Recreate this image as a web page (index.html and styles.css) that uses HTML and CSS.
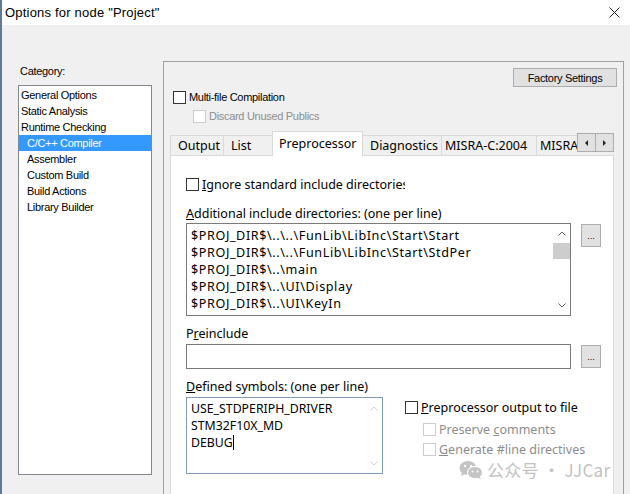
FILE: index.html
```html
<!DOCTYPE html>
<html lang="en">
<head>
  <meta charset="UTF-8">
  <title>Options for node "Project"</title>
  <link rel="stylesheet" href="styles.css">
</head>
<body>
  <div class="window">
    <!-- Title bar -->
    <div class="titlebar">
      <span class="title">Options for node "Project"</span>
      <svg class="close" width="11" height="11" viewBox="0 0 11 11">
        <path d="M0.5 0.5 L10.5 10.5 M10.5 0.5 L0.5 10.5" stroke="#222" stroke-width="1" fill="none"/>
      </svg>
    </div>

    <div class="main">
      <!-- Category list -->
      <div class="sidebar">
        <div class="cat-label">Category:</div>
        <ul class="cat-list">
          <li>General Options</li>
          <li>Static Analysis</li>
          <li>Runtime Checking</li>
          <li class="sub selected">C/C++ Compiler</li>
          <li class="sub">Assembler</li>
          <li class="sub">Custom Build</li>
          <li class="sub">Build Actions</li>
          <li class="sub">Library Builder</li>
        </ul>
      </div>

      <!-- Options panel -->
      <div class="panel">
        <div class="panel-top">
          <button class="btn factory">Factory Settings</button>
        </div>
        <label class="check multi"><span class="box"></span><span>Multi-file Compilation</span></label>
        <label class="check disabled discard"><span class="box"></span><span>Discard Unused Publics</span></label>

        <div class="tabs">
          <div class="tab-list">
            <div class="tab tab-output">Output</div>
            <div class="tab tab-list-item">List</div>
            <div class="tab active tab-pre">Preprocessor</div>
            <div class="tab tab-diag">Diagnostics</div>
            <div class="tab tab-misra">MISRA-C:2004</div>
            <div class="tab tab-misra">MISRA-C:1998</div>
          </div>
          <div class="tab-arrows">
            <button class="arrow"><span class="tri left"></span></button>
            <button class="arrow"><span class="tri right"></span></button>
          </div>
        </div>

        <div class="page">
          <label class="check ignore"><span class="box"></span><span class="ignore-text"><u>I</u>gnore standard include directories</span></label>

          <div class="field-label"><u>A</u>dditional include directories: (one per line)</div>
          <div class="field-row">
            <div class="textbox includes">
              <div class="lines">
                <div>$PROJ_DIR$\..\..\FunLib\LibInc\Start\Start</div>
                <div>$PROJ_DIR$\..\..\FunLib\LibInc\Start\StdPer</div>
                <div>$PROJ_DIR$\..\main</div>
                <div>$PROJ_DIR$\..\UI\Display</div>
                <div>$PROJ_DIR$\..\UI\KeyIn</div>
              </div>
              <div class="vscroll">
                <div class="sb-btn up"><svg width="8" height="5" viewBox="0 0 8 5"><path d="M0.5 4.5 L4 1 L7.5 4.5" stroke="#606060" fill="none"/></svg></div>
                <div class="sb-thumb"></div>
                <div class="sb-track"></div>
                <div class="sb-btn down"><svg width="8" height="5" viewBox="0 0 8 5"><path d="M0.5 0.5 L4 4 L7.5 0.5" stroke="#606060" fill="none"/></svg></div>
              </div>
            </div>
            <button class="btn dots">...</button>
          </div>

          <div class="field-label">P<u>r</u>einclude</div>
          <div class="field-row">
            <div class="textbox single"></div>
            <button class="btn dots">...</button>
          </div>

          <div class="field-label defined-label"><u>D</u>efined symbols: (one per line)</div>
          <div class="defined-row">
            <div class="textbox defines">
              <div class="lines">
                <div>USE_STDPERIPH_DRIVER</div>
                <div>STM32F10X_MD</div>
                <div>DEBUG<span class="caret"></span></div>
              </div>
              <div class="vscroll disabled">
                <div class="sb-btn up"><svg width="8" height="5" viewBox="0 0 8 5"><path d="M0.5 4.5 L4 1 L7.5 4.5" stroke="#cfcfcf" fill="none"/></svg></div>
                <div class="sb-track"></div>
                <div class="sb-btn down"><svg width="8" height="5" viewBox="0 0 8 5"><path d="M0.5 0.5 L4 4 L7.5 0.5" stroke="#cfcfcf" fill="none"/></svg></div>
              </div>
            </div>
            <div class="pp-options">
              <label class="check pp-main"><span class="box"></span><span><u>P</u>reprocessor output to file</span></label>
              <label class="check disabled pp-sub"><span class="box"></span><span>Preserve <u>c</u>omments</span></label>
              <label class="check disabled pp-sub"><span class="box"></span><span><u>G</u>enerate #line directives</span></label>
            </div>
          </div>

          <!-- watermark overlay -->
          <div class="watermark">
            <svg class="wechat" width="24" height="20" viewBox="0 0 24 20">
              <ellipse cx="9" cy="8" rx="8.5" ry="7" fill="#c4c4c4"/>
              <path d="M3 12 L2 16 L7 13.5 Z" fill="#c4c4c4"/>
              <ellipse cx="16" cy="12.5" rx="7.5" ry="6.2" fill="#c4c4c4" stroke="#fff" stroke-width="1.2"/>
              <path d="M20 16 L22 19 L17.5 17.5 Z" fill="#c4c4c4"/>
              <circle cx="6" cy="6" r="1.2" fill="#fff"/>
              <circle cx="12" cy="6" r="1.2" fill="#fff"/>
              <circle cx="13.5" cy="11.5" r="1" fill="#fff"/>
              <circle cx="18.5" cy="11.5" r="1" fill="#fff"/>
            </svg>
            <span class="wm-text">公众号 · JJCar</span>
          </div>
        </div>
      </div>
    </div>
  </div>
</body>
</html>
```

FILE: styles.css
```css
/* Base */
body {
  margin: 0;
  width: 630px;
  height: 494px;
  overflow: hidden;
  background-color: #f0f0f0;
  font-family: "Liberation Sans", Arial, sans-serif;
  color: #000;
}

.window {
  height: 494px;
  border-left: 2px solid #5d7a99;
  display: flex;
  flex-direction: column;
}

/* Small dialog font used by the outer controls */
.cat-label,
.cat-list li,
.factory,
.multi,
.discard {
  font-family: "Liberation Sans", Arial, sans-serif;
  font-size: 11px;
  letter-spacing: -0.3px;
}

/* Title bar */
.titlebar {
  height: 25px;
  flex: none;
  background-color: #fff;
  display: flex;
  align-items: center;
  justify-content: space-between;
  padding: 0 10px 0 3px;
  font-size: 13px;
  letter-spacing: 0.2px;
}

.main {
  display: flex;
  flex: 1;
  min-height: 0;
}

/* Category sidebar */
.sidebar {
  width: 134px;
  flex: none;
  margin-left: 16px;
  padding-top: 39px;
}

.cat-label {
  height: 14px;
  line-height: 14px;
  padding-left: 2px;
  margin-bottom: 7px;
}

.cat-list {
  list-style: none;
  margin: 0;
  padding: 1px 0 0;
  height: 390px;
  box-sizing: border-box;
  border: 1px solid #828790;
  background-color: #fff;
}

.cat-list li {
  height: 16px;
  line-height: 16px;
  padding-left: 2px;
  white-space: nowrap;
}

.cat-list li.sub {
  padding-left: 8px;
}

.cat-list li.selected {
  background-color: #3399ff;
  color: #fff;
}

/* Right panel */
.panel {
  width: 461px;
  flex: none;
  margin: 36px 0 0 11px;
  box-sizing: border-box;
  border: 1px solid #a0a0a0;
  border-bottom: none;
  display: flex;
  flex-direction: column;
}

.panel-top {
  display: flex;
  justify-content: flex-end;
  padding: 6px 6px 0 0;
}

.btn {
  background-color: #e1e1e1;
  border: 1px solid #adadad;
  box-sizing: border-box;
  padding: 0;
  color: #000;
}

.factory {
  width: 104px;
  height: 19px;
}

/* Checkboxes */
.check {
  display: flex;
  align-items: center;
  white-space: nowrap;
}

.box {
  width: 13px;
  height: 13px;
  flex: none;
  box-sizing: border-box;
  border: 1px solid #333;
  background-color: #fff;
  margin-right: 3px;
}

.check.disabled {
  color: #8d8d8d;
}

.check.disabled .box {
  border-color: #cccccc;
}

.multi,
.discard {
  height: 16px;
}

.multi {
  margin: 2px 0 0 9px;
}

.discard {
  margin: 3px 0 0 29px;
}

/* Tabs */
.tabs {
  display: flex;
  height: 24px;
  width: 444px;
  margin: 7px 0 0 6px;
  position: relative;
  z-index: 1;
}

.tab-list {
  display: flex;
  align-items: flex-start;
  flex: 1;
  height: 25px;
  overflow: hidden;
}

.tab {
  flex: none;
  height: 20px;
  margin-top: 4px;
  margin-right: -1px;
  box-sizing: border-box;
  border: 1px solid #d9d9d9;
  border-bottom: none;
  background-color: #f0f0f0;
  font-family: "Noto Sans", sans-serif;
  font-size: 12.5px;
  line-height: 19px;
  padding-left: 7px;
  white-space: nowrap;
  overflow: hidden;
}

.tab.active {
  height: 25px;
  margin-top: 0;
  background-color: #fff;
  line-height: 23px;
  padding-left: 6px;
}

.tab-output { width: 54px; }
.tab-list-item { width: 50px; }
.tab-pre { width: 91px; }
.tab-diag { width: 80px; }
.tab-misra { width: 96px; padding-left: 3px; }

.tab-arrows {
  display: flex;
  margin-top: 2px;
  height: 19px;
}

.arrow {
  width: 19px;
  height: 19px;
  box-sizing: border-box;
  border: 1px solid #adadad;
  background-color: #e1e1e1;
  padding: 0;
  display: flex;
  align-items: center;
  justify-content: center;
}

.arrow + .arrow {
  margin-left: -1px;
}

.tri {
  width: 0;
  height: 0;
  border-top: 3px solid transparent;
  border-bottom: 3px solid transparent;
}

.tri.left {
  border-right: 3px solid #222;
}

.tri.right {
  border-left: 3px solid #222;
}

/* Tab page */
.page {
  flex: 1;
  width: 444px;
  margin-left: 6px;
  box-sizing: border-box;
  background-color: #fff;
  border: 1px solid #d9d9d9;
  border-bottom: none;
  padding: 19px 0 0 15px;
  position: relative;
  font-family: "Noto Sans", sans-serif;
  font-size: 12.5px;
}

.ignore {
  height: 18px;
}

.ignore-text {
  width: 203px;
  overflow: hidden;
}

.field-label {
  height: 17px;
  line-height: 17px;
  margin: 12px 0 1px;
  white-space: nowrap;
}

.field-label + .field-row + .field-label {
  margin-top: 9px;
  margin-bottom: 2px;
}

.field-label.defined-label {
  margin-top: 14px;
}

.field-row {
  display: flex;
  align-items: flex-start;
  gap: 10px;
}

.textbox {
  box-sizing: border-box;
  border: 1px solid #7a7a7a;
  background-color: #fff;
  display: flex;
}

.includes {
  width: 385px;
  height: 93px;
}

.single {
  width: 385px;
  height: 25px;
}

.lines {
  flex: 1;
  padding: 3px 0 0 4px;
  font-size: 12.6px;
  letter-spacing: 0.6px;
  line-height: 17px;
  white-space: nowrap;
  overflow: hidden;
}

.vscroll {
  width: 17px;
  flex: none;
  display: flex;
  flex-direction: column;
}

.sb-btn {
  height: 19px;
  display: flex;
  align-items: center;
  justify-content: center;
}

.sb-thumb {
  height: 16px;
  background-color: #cdcdcd;
}

.sb-track {
  flex: 1;
}

.dots {
  width: 20px;
  height: 23px;
  margin-top: 1px;
  font-size: 9px;
  line-height: 16px;
}

/* Defined symbols + preprocessor options */
.defined-row {
  display: flex;
  gap: 22px;
}

.defines {
  width: 197px;
  height: 77px;
  border-color: #7f9db9;
}

.defines .lines {
  padding-top: 2px;
  font-size: 12.3px;
  letter-spacing: 0;
}

.caret {
  display: inline-block;
  width: 1px;
  height: 15px;
  background-color: #000;
  vertical-align: -3px;
}

.vscroll.disabled .sb-btn {
  height: 20px;
}

.pp-options {
  display: flex;
  flex-direction: column;
}

.pp-options .check {
  height: 20px;
}

.pp-main {
  margin-bottom: 2px;
}

.pp-sub {
  margin-left: 18px;
}

/* Watermark */
.watermark {
  position: absolute;
  left: 288px;
  top: 301px;
  display: flex;
  align-items: center;
  gap: 4px;
  white-space: nowrap;
}

.wm-text {
  font-family: "Noto Sans CJK SC", "Noto Sans", sans-serif;
  font-size: 17px;
  color: #c2c2c2;
  letter-spacing: 0.3px;
}
```
